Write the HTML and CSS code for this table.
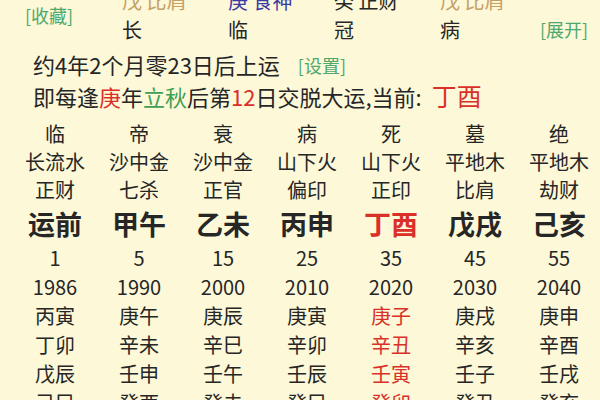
FILE: index.html
```html
<!DOCTYPE html>
<html lang="zh">
<head>
<meta charset="utf-8">
<link rel="stylesheet" href="styles.css">
</head>
<body>
<div class="page">
  <div class="top">
    <div class="fav"><span class="link">[收藏]</span></div>
    <div class="tcell"><div class="gold">戊 比肩</div><div>长</div></div>
    <div class="tcell"><div class="blue">庚 食神</div><div>临</div></div>
    <div class="tcell"><div>癸 正财</div><div>冠</div></div>
    <div class="tcell last"><div class="gold">戊 比肩</div><div>病</div></div>
    <div class="expand"><span class="link">[展开]</span></div>
  </div>
  <div class="info">
    <div class="line">约4年2个月零23日后上运<span class="link set">[设置]</span></div>
    <div class="line">即每逢<span class="red">庚</span>年<span class="green">立秋</span>后第<span class="red">12</span>日交脱大运,当前: <span class="red cur">丁酉</span></div>
  </div>
  <div class="grid">
    <div class="col">
      <div class="c">临</div><div class="c">长流水</div><div class="c">正财</div><div class="big">运前</div>
      <div class="c">1</div><div class="c">1986</div><div class="c">丙寅</div><div class="c">丁卯</div><div class="c">戊辰</div><div class="c">己巳</div>
    </div>
    <div class="col">
      <div class="c">帝</div><div class="c">沙中金</div><div class="c">七杀</div><div class="big">甲午</div>
      <div class="c">5</div><div class="c">1990</div><div class="c">庚午</div><div class="c">辛未</div><div class="c">壬申</div><div class="c">癸酉</div>
    </div>
    <div class="col">
      <div class="c">衰</div><div class="c">沙中金</div><div class="c">正官</div><div class="big">乙未</div>
      <div class="c">15</div><div class="c">2000</div><div class="c">庚辰</div><div class="c">辛巳</div><div class="c">壬午</div><div class="c">癸未</div>
    </div>
    <div class="col">
      <div class="c">病</div><div class="c">山下火</div><div class="c">偏印</div><div class="big">丙申</div>
      <div class="c">25</div><div class="c">2010</div><div class="c">庚寅</div><div class="c">辛卯</div><div class="c">壬辰</div><div class="c">癸巳</div>
    </div>
    <div class="col">
      <div class="c">死</div><div class="c">山下火</div><div class="c">正印</div><div class="big red">丁酉</div>
      <div class="c">35</div><div class="c">2020</div><div class="c red">庚子</div><div class="c red">辛丑</div><div class="c red">壬寅</div><div class="c red">癸卯</div>
    </div>
    <div class="col">
      <div class="c">墓</div><div class="c">平地木</div><div class="c">比肩</div><div class="big">戊戌</div>
      <div class="c">45</div><div class="c">2030</div><div class="c">庚戌</div><div class="c">辛亥</div><div class="c">壬子</div><div class="c">癸丑</div>
    </div>
    <div class="col">
      <div class="c">绝</div><div class="c">平地木</div><div class="c">劫财</div><div class="big">己亥</div>
      <div class="c">55</div><div class="c">2040</div><div class="c">庚申</div><div class="c">辛酉</div><div class="c">壬戌</div><div class="c">癸亥</div>
    </div>
  </div>
</div>
</body>
</html>
```

FILE: styles.css
```css
html, body {
  margin: 0;
  padding: 0;
  width: 600px;
  height: 400px;
  overflow: hidden;
  background: #fcf8d8;
}
.page {
  font-family: "Noto Sans CJK SC", "Noto Sans", sans-serif;
  color: #262626;
  width: 600px;
}
.top {
  display: flex;
  margin-top: -14px;
  height: 58px;
  font-size: 20px;
  line-height: 29px;
}
.fav {
  width: 122px;
  box-sizing: border-box;
  padding-left: 25px;
  align-self: center;
}
.tcell {
  width: 106px;
  white-space: nowrap;
}
.tcell.last {
  width: 100px;
}
.expand {
  align-self: flex-end;
}
.link {
  color: #4fa86e;
  font-size: 18px;
}
.gold { color: #c6a064; }
.blue { color: #3a3aa6; }
.red { color: #d9302a; }
.green { color: #3da055; }
.info {
  padding-left: 33px;
  margin-top: 5px;
  font-size: 22px;
  line-height: 30px;
}
.line {
  white-space: nowrap;
}
.set {
  margin-left: 18px;
  vertical-align: 1px;
}
.cur {
  font-size: 25px;
  margin-left: 5px;
}
.grid {
  display: grid;
  grid-template-columns: repeat(7, 84px);
  padding-left: 13px;
  margin-top: 9px;
}
.col {
  display: flex;
  flex-direction: column;
  align-items: center;
}
.c {
  font-size: 20px;
  line-height: 28px;
  height: 28px;
  white-space: nowrap;
}
.c:nth-child(n+5) {
  line-height: 29px;
  height: 29px;
}
.big {
  font-size: 27px;
  font-weight: bold;
  line-height: 39px;
  height: 39px;
  white-space: nowrap;
}
```
